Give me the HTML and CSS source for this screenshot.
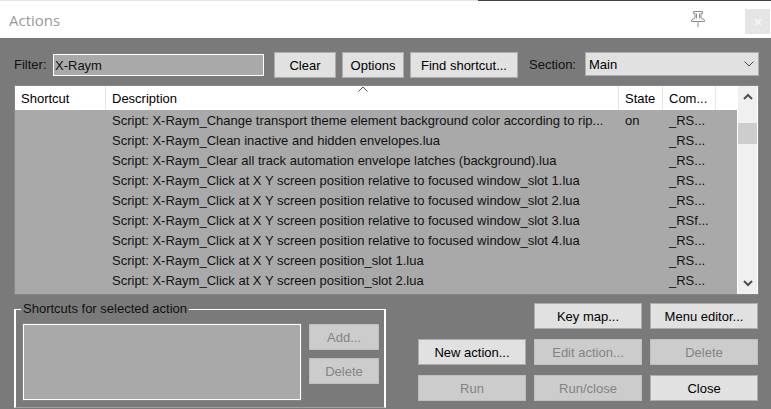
FILE: index.html
```html
<!DOCTYPE html>
<html lang="en">
<head>
<meta charset="utf-8">
<title>Actions</title>
<link rel="stylesheet" href="styles.css">
</head>
<body>
<header class="titlebar">
  <h1 class="title">Actions</h1>
  <button class="pin" type="button" aria-label="Pin">
    <svg width="16" height="18" viewBox="0 0 16 18" fill="none" stroke="#8c8c8c"><path d="M3.500 1.500h9v2h-1.500v4.500l3.500 2v1.500h-13v-1.500l3.500-2v-4.500h-1.500zM8 12v5M6.500 3.500v5M9.500 3.500v5"/></svg>
  </button>
  <button class="close" type="button" aria-label="Close window">
    <svg width="8" height="8" viewBox="0 0 8 8" stroke="#f4f4f4" stroke-width="2"><path d="M1 1l6 6M7 1l-6 6"/></svg>
  </button>
</header>
<main class="content">
  <form class="toolbar">
    <label class="filter-label" for="filter">Filter:</label>
    <input class="filter" id="filter" type="text" value="X-Raym">
    <button class="btn btn-small" type="button">Clear</button>
    <button class="btn btn-small" type="button">Options</button>
    <button class="btn btn-wide" type="button">Find shortcut...</button>
    <label class="section-label" for="section">Section:</label>
    <div class="select-wrap">
      <select class="section" id="section"><option>Main</option></select>
      <svg class="select-arrow" width="10" height="6" viewBox="0 0 10 6" fill="none" stroke="#444"><path d="M.5 .5L5 5 9.500 .5"/></svg>
    </div>
  </form>
  <section class="list">
    <div class="list-body">
      <svg class="sort-arrow" width="10" height="6" viewBox="0 0 10 6" fill="none" stroke="#555"><path d="M.5 5.500L5 1 9.500 5.500"/></svg>
      <table class="actions">
        <colgroup><col class="col-shortcut"><col><col class="col-state"><col class="col-command"><col class="col-rest"></colgroup>
        <thead><tr><th>Shortcut</th><th>Description</th><th>State</th><th>Com...</th><td></td></tr></thead>
        <tbody>
          <tr><td></td><td>Script: X-Raym_Change transport theme element background color according to rip...</td><td>on</td><td>_RS...</td><td></td></tr>
          <tr><td></td><td>Script: X-Raym_Clean inactive and hidden envelopes.lua</td><td></td><td>_RS...</td><td></td></tr>
          <tr><td></td><td>Script: X-Raym_Clear all track automation envelope latches (background).lua</td><td></td><td>_RS...</td><td></td></tr>
          <tr><td></td><td>Script: X-Raym_Click at X Y screen position relative to focused window_slot 1.lua</td><td></td><td>_RS...</td><td></td></tr>
          <tr><td></td><td>Script: X-Raym_Click at X Y screen position relative to focused window_slot 2.lua</td><td></td><td>_RS...</td><td></td></tr>
          <tr><td></td><td>Script: X-Raym_Click at X Y screen position relative to focused window_slot 3.lua</td><td></td><td>_RSf...</td><td></td></tr>
          <tr><td></td><td>Script: X-Raym_Click at X Y screen position relative to focused window_slot 4.lua</td><td></td><td>_RS...</td><td></td></tr>
          <tr><td></td><td>Script: X-Raym_Click at X Y screen position_slot 1.lua</td><td></td><td>_RS...</td><td></td></tr>
          <tr><td></td><td>Script: X-Raym_Click at X Y screen position_slot 2.lua</td><td></td><td>_RS...</td><td></td></tr>
        </tbody>
      </table>
    </div>
    <div class="scrollbar">
      <svg width="10" height="7" viewBox="0 0 10 7" fill="none" stroke="#505050" stroke-width="2"><path d="M1 6l4-4 4 4"/></svg>
      <div class="thumb"></div>
      <svg width="10" height="7" viewBox="0 0 10 7" fill="none" stroke="#505050" stroke-width="2"><path d="M1 1l4 4 4-4"/></svg>
    </div>
  </section>
  <div class="bottom">
    <fieldset class="group">
      <legend>Shortcuts for selected action</legend>
      <div class="shortcut-list" role="listbox" aria-label="Shortcuts for selected action"></div>
      <div class="group-buttons">
        <button class="btn" type="button" disabled>Add...</button>
        <button class="btn" type="button" disabled>Delete</button>
      </div>
    </fieldset>
    <div class="commands">
      <button class="btn key-map" type="button">Key map...</button>
      <button class="btn" type="button">Menu editor...</button>
      <button class="btn" type="button">New action...</button>
      <button class="btn" type="button" disabled>Edit action...</button>
      <button class="btn" type="button" disabled>Delete</button>
      <button class="btn" type="button" disabled>Run</button>
      <button class="btn" type="button" disabled>Run/close</button>
      <button class="btn" type="button">Close</button>
    </div>
  </div>
</main>
</body>
</html>
```

FILE: styles.css
```css
* { box-sizing: border-box; }

body {
  margin: 0;
  background: #7a7a7a;
  color: #111;
  font: 13px/16px "Liberation Sans", Arial, sans-serif;
}

button, input, select { font: inherit; color: #000; }

.titlebar {
  display: flex;
  align-items: center;
  height: 38px;
  padding-left: 9px;
  background: linear-gradient(90deg, #e5e5e5 62%, #444 62%) top / 100% 1px no-repeat #fff;
}

.title {
  flex: 1;
  margin: 0;
  padding-top: 2px;
  color: #999;
  font: 15px/20px "Open Sans", "Noto Sans", sans-serif;
}

.pin, .close { padding: 0; border: 0; background: none; }
.pin { height: 18px; margin-right: 39px; }
.pin svg { display: block; }

.close {
  display: grid;
  place-items: center;
  width: 25px;
  height: 25px;
  margin: 5px 1px 0 0;
  background: #e5e5e5;
}

.content { padding: 14px 12px 0 14px; }

.toolbar { display: flex; align-items: flex-start; }
.toolbar label { margin-top: 5px; }
.filter-label { width: 39px; }

.filter {
  flex: 1;
  min-width: 0;
  height: 22px;
  margin: 2px 10px 0 0;
  padding: 0 1px;
  border: 1px solid #fff;
  border-radius: 0;
  background: #a9a9a9;
  color: #111;
}

.btn {
  height: 26px;
  padding: 1px 0 0;
  border: 1px solid #adadad;
  background: #e1e1e1;
}
.btn:disabled { border-color: #bfbfbf; background: #ccc; color: #838383; }
.btn-small { width: 62px; margin-right: 6px; }
.btn-wide { width: 108px; }
.section-label { width: 56px; margin-left: 11px; }

.select-wrap { position: relative; width: 174px; }
.section {
  display: block;
  width: 100%;
  height: 24px;
  padding: 1px 3px 0;
  border: 1px solid #adadad;
  border-radius: 0;
  background: #e1e1e1;
  appearance: none;
}
.select-arrow { position: absolute; top: 9px; right: 5px; pointer-events: none; }

.list {
  display: flex;
  margin-top: 7px;
  border: 1px solid #828790;
  background: #a9a9a9;
}
.list-body { position: relative; flex: 1; min-width: 0; padding-bottom: 4px; }
.sort-arrow { position: absolute; top: 0; left: 343px; }

.actions { width: 100%; border-spacing: 0; table-layout: fixed; }
.actions th, .actions td {
  height: 20px;
  padding: 2px 0 0 6px;
  overflow: hidden;
  text-align: left;
  font-weight: normal;
  white-space: nowrap;
}
.actions thead { background: #fff; color: #000; }
.actions thead th, .actions thead td { height: 24px; }
.actions thead th { border-right: 1px solid #e5e5e5; }
.col-shortcut { width: 91px; }
.col-state { width: 44px; }
.col-command { width: 53px; }
.col-rest { width: 21px; }

.scrollbar {
  display: flex;
  flex-direction: column;
  align-items: center;
  width: 21px;
  padding: 7px 0;
  border: solid #fff;
  border-width: 0 1px;
  background: #f0f0f0;
}
.thumb { width: 100%; height: 21px; margin: 23px 0 auto; background: #cdcdcd; }

.bottom {
  display: flex;
  justify-content: space-between;
  align-items: flex-start;
  margin: 6px 1px 0 0;
}

.group {
  display: flex;
  gap: 8px;
  flex: 0 1 372px;
  min-width: 0;
  margin: 0;
  padding: 7px 5px 7px 7px;
  border: 2px solid #fff;
  border-top-width: 1px;
  border-bottom-color: #a0a0a0;
  border-bottom-width: 1px;
}
.group legend { padding: 0 2px; margin-left: -2px; }
.shortcut-list {
  flex: 1;
  border: 1px solid #fff;
  outline: 1px solid #828790;
  background: #a9a9a9;
}
.group-buttons { display: grid; gap: 8px; width: 70px; padding-bottom: 16px; }

.commands {
  display: grid;
  grid-template-columns: repeat(3, 108px);
  gap: 10px 8px;
  margin-top: 2px;
}
.key-map { grid-column: 2; }
```
